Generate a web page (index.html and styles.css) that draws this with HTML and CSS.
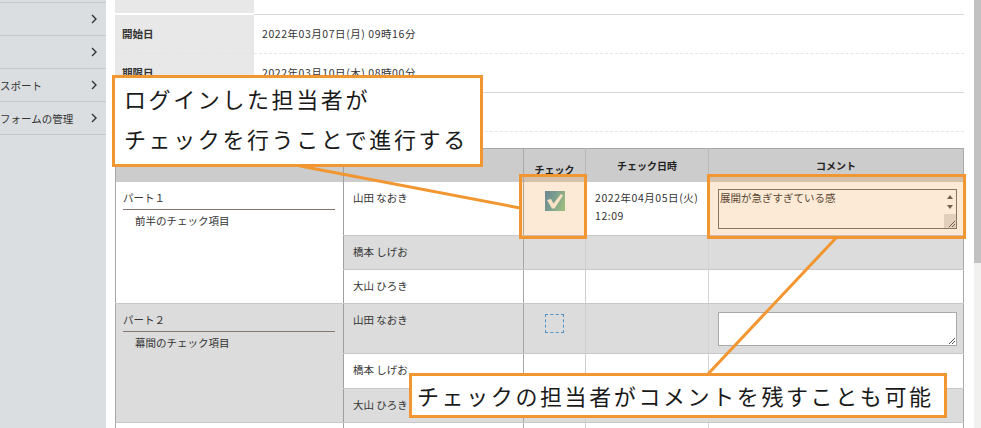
FILE: index.html
```html
<!DOCTYPE html>
<html lang="ja">
<head>
<meta charset="utf-8">
<title>チェック</title>
<link rel="stylesheet" href="styles.css">
</head>
<body>
<div class="page">
  <aside class="sidebar">
    <div class="nav-item"><span class="nav-label"></span><svg class="chev" viewBox="0 0 6 10"><polyline points="1,1 5,5 1,9"/></svg></div>
    <div class="nav-item"><span class="nav-label"></span><svg class="chev" viewBox="0 0 6 10"><polyline points="1,1 5,5 1,9"/></svg></div>
    <div class="nav-item"><span class="nav-label">スポート</span><svg class="chev" viewBox="0 0 6 10"><polyline points="1,1 5,5 1,9"/></svg></div>
    <div class="nav-item"><span class="nav-label">フォームの管理</span><svg class="chev" viewBox="0 0 6 10"><polyline points="1,1 5,5 1,9"/></svg></div>
    <div class="nav-end"></div>
  </aside>

  <main class="main">
    <table class="info">
      <colgroup><col class="c-label"><col></colgroup>
      <tr class="row-top solid"><th></th><td></td></tr>
      <tr class="row dash"><th>開始日</th><td><span class="date">2022年03月07日(月) 09時16分</span></td></tr>
      <tr class="row solid"><th>期限日</th><td><span class="date">2022年03月10日(木) 08時00分</span></td></tr>
      <tr class="row dash"><th></th><td></td></tr>
    </table>

    <table class="checks">
      <colgroup>
        <col class="c1"><col class="c2"><col class="c3"><col class="c4"><col class="c5">
      </colgroup>
      <tr class="head">
        <th class="col-part"></th><th class="col-name"></th><th class="col-chk">チェック</th><th class="col-dt">チェック日時</th><th class="col-cm">コメント</th>
      </tr>
      <tr class="white h54">
        <td class="col-part white" rowspan="3">
          <div class="part-title">パート１</div>
          <div class="part-desc">前半のチェック項目</div>
        </td>
        <td class="col-name">山田 なおき</td>
        <td class="col-chk">
          <svg class="checked" viewBox="0 0 20 20">
            <defs>
              <linearGradient id="cg" x1="0" y1="0.2" x2="1" y2="0.6">
                <stop offset="0" stop-color="#4d86a8"/>
                <stop offset="0.45" stop-color="#5fa0a8"/>
                <stop offset="1" stop-color="#86c592"/>
              </linearGradient>
            </defs>
            <rect x="0" y="0" width="20" height="20" fill="url(#cg)"/>
            <polygon points="2,9 6,8 8.5,12.5 16,3 18,4.5 9.5,17.5 7,17.5" fill="#fbf6ea"/>
          </svg>
        </td>
        <td class="col-dt"><span class="date">2022年04月05日(火)<br>12:09</span></td>
        <td class="col-cm">
          <div class="ta ta-filled">
            <span class="ta-text">展開が急ぎすぎている感</span>
            <div class="ta-bar">
              <span class="arr arr-up"></span>
              <span class="arr arr-down"></span>
              <span class="ta-corner"><svg viewBox="0 0 12 14"><line x1="5" y1="13" x2="11" y2="7"/><line x1="8" y1="13" x2="11" y2="10"/></svg></span>
            </div>
          </div>
        </td>
      </tr>
      <tr class="grey h34"><td class="col-name">橋本 しげお</td><td class="col-chk"></td><td class="col-dt"></td><td class="col-cm"></td></tr>
      <tr class="white h34"><td class="col-name">大山 ひろき</td><td class="col-chk"></td><td class="col-dt"></td><td class="col-cm"></td></tr>

      <tr class="grey h50">
        <td class="col-part grey" rowspan="3">
          <div class="part-title">パート２</div>
          <div class="part-desc">幕間のチェック項目</div>
        </td>
        <td class="col-name">山田 なおき</td>
        <td class="col-chk"><span class="unchecked"></span></td>
        <td class="col-dt"></td>
        <td class="col-cm">
          <div class="ta ta-empty">
            <span class="ta-grip"><svg viewBox="0 0 10 10"><line x1="3" y1="9" x2="9" y2="3"/><line x1="6" y1="9" x2="9" y2="6"/></svg></span>
          </div>
        </td>
      </tr>
      <tr class="white h35"><td class="col-name">橋本 しげお</td><td class="col-chk"></td><td class="col-dt"></td><td class="col-cm"></td></tr>
      <tr class="grey h34"><td class="col-name">大山 ひろき</td><td class="col-chk"></td><td class="col-dt"></td><td class="col-cm"></td></tr>
      <tr class="white h30"><td class="col-part white"></td><td class="col-name"></td><td class="col-chk"></td><td class="col-dt"></td><td class="col-cm"></td></tr>
    </table>
  </main>

  <div class="scrollbar"><div class="thumb"></div></div>

  <div class="annot">
    <div class="hl hl-check"></div>
    <div class="hl hl-comment"></div>
    <svg class="leaders" viewBox="0 0 981 428">
      <line x1="300" y1="166" x2="520" y2="208"/>
      <line x1="836" y1="238" x2="708" y2="374"/>
    </svg>
    <div class="callout callout-login">ログインした担当者が<br>チェックを行うことで進行する</div>
    <div class="callout callout-comment">チェックの担当者がコメントを残すことも可能</div>
  </div>
</div>
</body>
</html>
```

FILE: styles.css
```css
* { box-sizing: border-box; }

body {
  margin: 0;
  width: 981px;
  height: 428px;
  overflow: hidden;
  background: #fff;
  color: #333;
  font-family: "Noto Sans CJK JP", "Noto Sans", sans-serif;
  font-size: 10.5px;
}

.page {
  position: relative;
  display: flex;
  height: 428px;
}

/* sidebar */
.sidebar {
  width: 106px;
  flex: none;
  background: #dadee1;
  padding-top: 2px;
}
.nav-item {
  height: 33px;
  border-top: 1px solid #c5c9cc;
  display: flex;
  align-items: center;
  justify-content: space-between;
  padding-right: 9px;
}
.nav-label { white-space: nowrap; color: #333; }
.chev {
  width: 6px;
  height: 10px;
  fill: none;
  stroke: #333;
  stroke-width: 1.4;
}
.nav-end { border-top: 1px solid #c5c9cc; }

/* main */
.main {
  flex: 1;
  padding: 0 10px 0 9px;
}

.date { letter-spacing: 0.55px; }

.info {
  width: 100%;
  border-collapse: collapse;
  table-layout: fixed;
}
.c-label { width: 139px; }
.info th {
  background: #e8e8e8;
  text-align: left;
  font-weight: bold;
  padding: 0 7px;
  color: #333;
}
.info td {
  padding: 0 8px;
}
.info .row-top { height: 14px; }
.info .row { height: 39px; }
.info .solid th { border-bottom: 2px solid #fff; }
.info .solid td { border-bottom: 1px solid #d8d8d8; }
.info .dash th { border-bottom: 1px dashed #e4e4e4; }
.info .dash td { border-bottom: 1px dashed #e6e6e6; }

/* checks table */
.checks {
  width: 848px;
  margin-top: 16px;
  border-collapse: collapse;
  table-layout: fixed;
  border: 1px solid #a8a8a8;
}
.c1 { width: 228px; }
.c2 { width: 180px; }
.c3 { width: 62px; }
.c4 { width: 123px; }
.c5 { width: 255px; }

.checks th {
  height: 34px;
  background: #cccccc;
  font-weight: bold;
  font-size: 10px;
  color: #222;
  text-align: center;
  vertical-align: middle;
  padding: 0;
}
.checks td {
  vertical-align: top;
  padding: 7px 9px 0;
  line-height: 18px;
  border-bottom: 1px solid #c8c8c8;
}
.checks .col-name { border-left: 1px solid #a0a0a0; }
.checks .col-chk { border-left: 1px solid #a8a8a8; text-align: center; padding: 9px 0 0; }
.checks .col-dt { border-left: 1px solid #cfcfcf; }
.checks .col-cm { border-left: 1px solid #d4d4d4; }
.checks th.col-dt, .checks th.col-cm { border-left-color: #b8b8b8; }

.checks .white { background: #fff; }
.checks .grey { background: #dcdcdc; }
.h54 { height: 53px; }
.h50 { height: 50px; }
.h35 { height: 35px; }
.h34 { height: 34px; }
.h30 { height: 30px; }

.checks td.col-part { padding: 7px 8px 0 7px; border-bottom: 1px solid #c8c8c8; }
.part-title {
  border-bottom: 1px solid #857873;
  padding-bottom: 2px;
}
.part-desc {
  padding-left: 12px;
  margin-top: 2px;
}

.checked {
  display: block;
  width: 20px;
  height: 20px;
  margin: 0 auto;
}
.unchecked {
  display: block;
  width: 19px;
  height: 19px;
  margin: 1px auto 0;
  border: 1px dashed #4f92c6;
}

/* textareas */
.ta {
  position: relative;
  width: 239px;
  background: #fff;
  display: flex;
}
.ta-filled {
  height: 40px;
  border: 1px solid #6f6f6f;
}
.ta-text {
  flex: 1;
  padding: 1px 1px 0 1px;
  line-height: 14px;
  color: #333;
}
.ta-bar {
  width: 12px;
  display: flex;
  flex-direction: column;
  align-items: center;
}
.arr {
  width: 0;
  height: 0;
  border-left: 3px solid transparent;
  border-right: 3px solid transparent;
}
.arr-up { border-bottom: 4px solid #555; margin-top: 5px; }
.arr-down { border-top: 4px solid #555; margin-top: 6px; }
.ta-corner {
  margin-top: auto;
  width: 12px;
  height: 14px;
  background: #dedede;
}
.ta-corner svg, .ta-grip svg {
  display: block;
  width: 100%;
  height: 100%;
  stroke: #555;
  stroke-width: 1;
}
.ta-empty {
  height: 34px;
  margin-top: 1px;
  border: 1px solid #a9a9a9;
  justify-content: flex-end;
  align-items: flex-end;
}
.ta-grip {
  width: 10px;
  height: 10px;
}

/* scrollbar */
.scrollbar {
  width: 8px;
  flex: none;
  background: #f1f1ef;
}
.thumb {
  height: 263px;
  background: #c1c1c1;
}

/* annotations */
.annot {
  position: absolute;
  left: 0;
  top: 0;
  width: 981px;
  height: 428px;
  pointer-events: none;
}
.hl {
  position: absolute;
  border: 3px solid #f29631;
  background: rgba(242, 150, 49, 0.2);
}
.hl-check { left: 519px; top: 174px; width: 68px; height: 65px; }
.hl-comment { left: 707px; top: 174px; width: 259px; height: 65px; }

.leaders {
  position: absolute;
  left: 0;
  top: 0;
  width: 981px;
  height: 428px;
}
.leaders line {
  stroke: #f29631;
  stroke-width: 3;
}

.callout {
  position: absolute;
  background: #fff;
  border: 3px solid #f29631;
  color: #1a1a1a;
  font-size: 22px;
  letter-spacing: 2.6px;
  white-space: nowrap;
}
.callout-login {
  left: 112px;
  top: 75px;
  width: 371px;
  height: 92px;
  padding: 0 0 0 9px;
  line-height: 40px;
}
.callout-comment {
  left: 409px;
  top: 373px;
  width: 538px;
  height: 45px;
  padding: 0 0 0 5px;
  line-height: 39px;
}
```
